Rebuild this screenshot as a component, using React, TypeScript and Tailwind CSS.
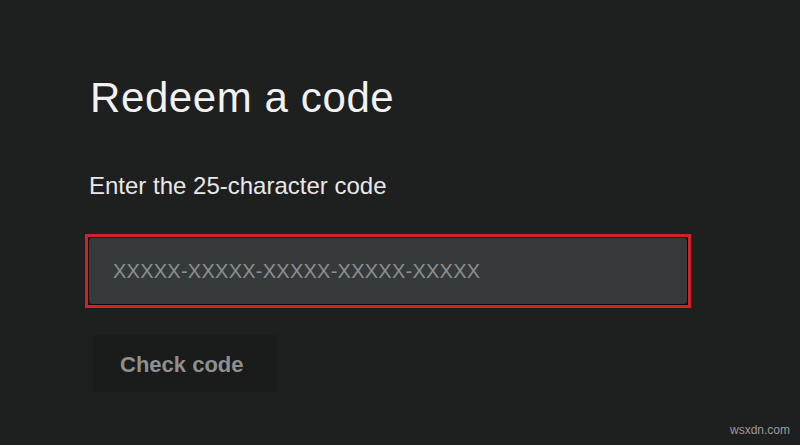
export default function App() {
  return (
    <div
      className="relative h-[445px] w-[800px] overflow-hidden bg-[#1e1f1f] pl-[85px] pt-[74px]"
      style={{ fontFamily: '"Liberation Sans", Arial, sans-serif' }}
    >
      <h1 className="ml-[5px] text-[42px] font-normal leading-[48px] tracking-[0.6px] text-[#f2f2f2]">Redeem a code</h1>
      <p className="ml-[4px] mt-[48px] text-[24px] leading-[32px] text-[#e8e8e8]">Enter the 25-character code</p>

      {/* focused code field */}
      <div className="mt-[32px] h-[74px] w-[606px] border-[3px] border-[#d3202b] bg-[#0c0c0c] p-[1px]">
        <div className="flex h-full items-center rounded-[3px] bg-[#363a3b] pl-[24px]">
          <input
            readOnly
            placeholder="XXXXX-XXXXX-XXXXX-XXXXX-XXXXX"
            className="w-full bg-transparent text-[20px] tracking-[0.25px] text-[#8b8e8f] outline-none placeholder:text-[#8b8e8f]"
          />
        </div>
      </div>

      <button className="ml-[8px] mt-[27px] flex h-[57px] w-[184px] items-center bg-[#1a1b1b] pl-[27px] pt-[2px] text-[22px] font-bold text-[#8e9090]">
        Check code
      </button>

      <span className="absolute bottom-[6px] right-[10px] text-[12px] text-[#9c9c9c]">wsxdn.com</span>
    </div>
  );
}
